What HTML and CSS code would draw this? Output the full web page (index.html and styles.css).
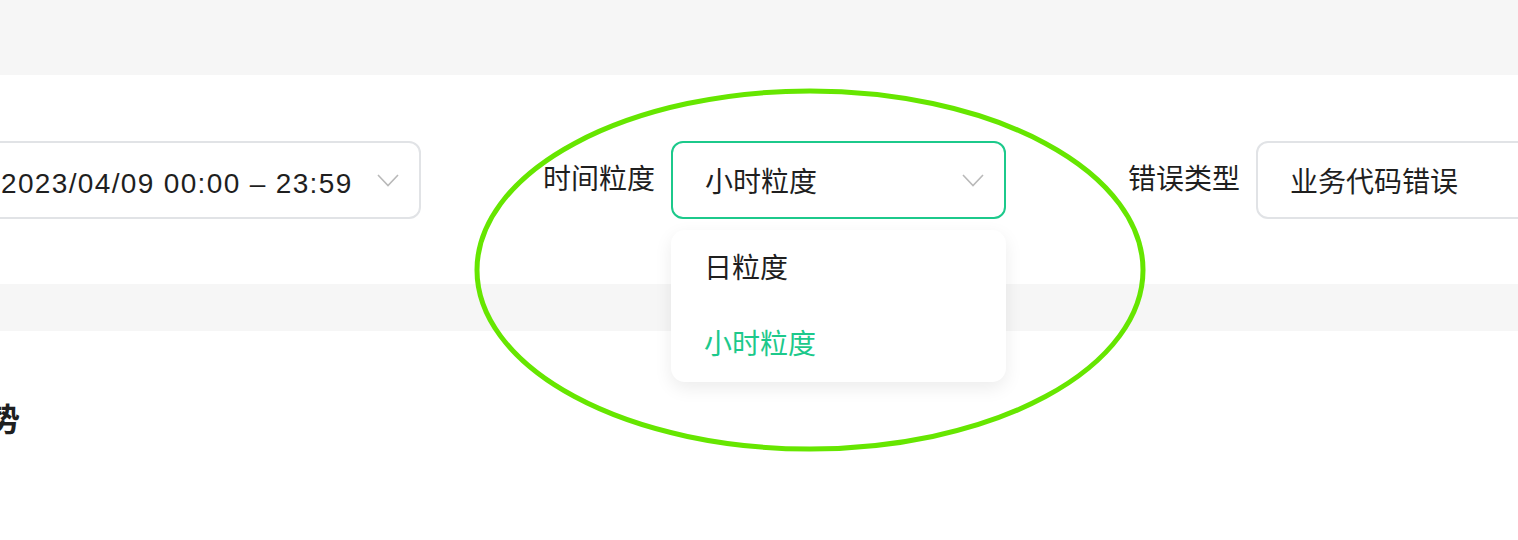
FILE: index.html
```html
<!DOCTYPE html>
<html lang="zh-CN">

<head>
    <meta charset="UTF-8" />
    <meta name="viewport" content="width=device-width, initial-scale=1.0" />
    <title>错误统计</title>
    <link rel="stylesheet" href="styles.css">
</head>

<body>
    <div class="top-band"></div>

    <div class="filter-bar">
        <div class="filter-group date-group">
            <div class="select-box date-box">
                <span class="date-text">2023/04/09 00:00 – 23:59</span>
                <svg class="chevron" viewBox="0 0 22 13"><path d="M1 1 L11 11.5 L21 1" /></svg>
            </div>
        </div>

        <div class="filter-group">
            <span class="filter-label">时间粒度</span>
            <div class="select-box active">
                <span>小时粒度</span>
                <svg class="chevron" viewBox="0 0 22 13"><path d="M1 1 L11 11.5 L21 1" /></svg>
                <ul class="dropdown">
                    <li>日粒度</li>
                    <li class="selected">小时粒度</li>
                </ul>
            </div>
        </div>

        <div class="filter-group">
            <span class="filter-label">错误类型</span>
            <div class="select-box">
                <span>业务代码错误</span>
                <svg class="chevron" viewBox="0 0 22 13"><path d="M1 1 L11 11.5 L21 1" /></svg>
            </div>
        </div>
    </div>

    <div class="gap-band"></div>

    <div class="chart-section">
        <h2 class="chart-title">错误趋势</h2>
    </div>

    <!-- annotation -->
    <svg class="highlight" width="680" height="372" viewBox="0 0 680 372">
        <ellipse cx="340" cy="186" rx="333" ry="179" />
    </svg>
</body>

</html>
```

FILE: styles.css
```css
body {
    margin: 0;
    width: 1518px;
    height: 540px;
    overflow: hidden;
    position: relative;
    background: #fff;
    color: #1f1f1f;
    font-family: "Liberation Sans", "Noto Sans CJK SC", sans-serif;
    font-size: 28px;
}

.top-band {
    height: 75px;
    background: #f6f6f6;
}

.filter-bar {
    height: 209px;
    box-sizing: border-box;
    padding-top: 66px;
    display: flex;
    align-items: flex-start;
    gap: 122px;
    white-space: nowrap;
}

.filter-group {
    display: flex;
    align-items: center;
    gap: 16px;
    flex-shrink: 0;
}

.date-group {
    margin-left: -33px;
}

.filter-label {
    line-height: 78px;
}

.select-box {
    position: relative;
    width: 335px;
    height: 78px;
    box-sizing: border-box;
    border: 2px solid #e1e3e6;
    border-radius: 12px;
    padding: 0 20px 0 32px;
    display: flex;
    align-items: center;
    flex-shrink: 0;
}

.select-box.active {
    border-color: #1cc98b;
}

.date-box {
    width: 454px;
}

.date-text {
    letter-spacing: 1.35px;
    margin-top: 8px;
}

.chevron {
    width: 22px;
    height: 13px;
    margin-left: auto;
    fill: none;
    stroke: #b9b9b9;
    stroke-width: 1.6;
}

.dropdown {
    position: absolute;
    top: 87px;
    left: -2px;
    width: 335px;
    margin: 0;
    padding: 0;
    list-style: none;
    background: #fff;
    border-radius: 14px;
    box-shadow: 0 6px 18px rgba(0, 0, 0, 0.08);
    z-index: 2;
}

.dropdown li {
    height: 76px;
    line-height: 78px;
    padding-left: 33px;
}

.dropdown li.selected {
    color: #1cc98b;
}

.gap-band {
    height: 47px;
    background: #f6f6f6;
}

.chart-section {
    padding-top: 66px;
}

.chart-title {
    margin: 0 0 0 -108px;
    font-size: 32px;
    font-weight: bold;
    line-height: 46px;
}

.highlight {
    position: absolute;
    left: 470px;
    top: 84px;
    fill: none;
    stroke: #66e600;
    stroke-width: 5;
    z-index: 3;
}
```
